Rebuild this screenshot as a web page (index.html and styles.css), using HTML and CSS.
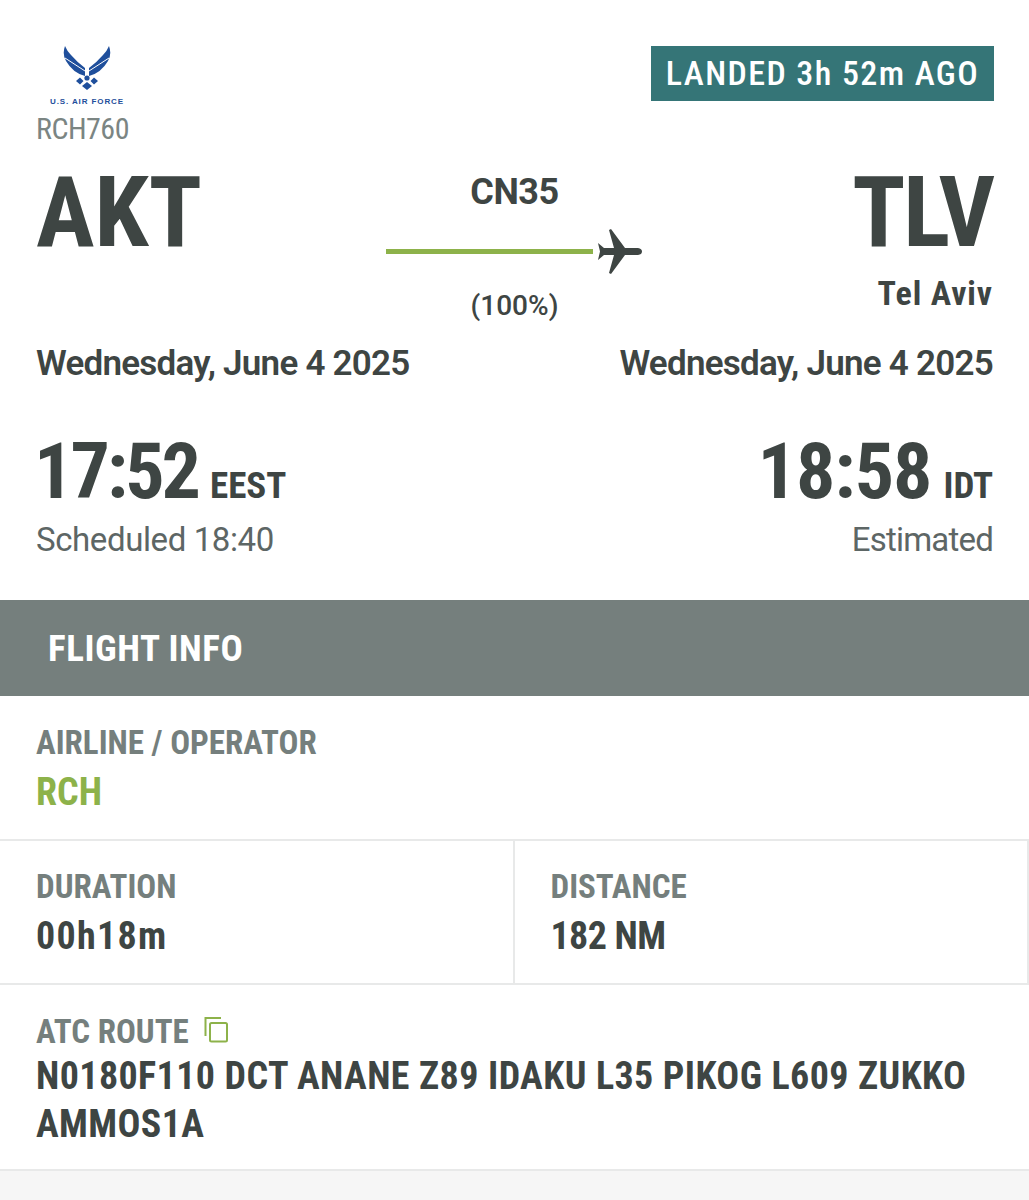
FILE: index.html
```html
<!DOCTYPE html>
<html lang="en">
<head>
    <meta charset="UTF-8">
    <meta name="viewport" content="width=device-width, initial-scale=1.0">
    <title>RCH760</title>
    <link rel="stylesheet" href="styles.css">
</head>
<body>
    <div class="summary">
        <div class="top-row">
            <div class="brand">
                <div class="logo">
                    <svg width="48" height="44" viewBox="0 0 48 44">
                        <path fill="#1f4f9c" d="M2 0 Q4 5 8 9 Q14 16 22 22 L22 30 Q10 27 3 15 Q-1 8 2 0 Z"/>
                        <path fill="#1f4f9c" d="M46 0 Q44 5 40 9 Q34 16 26 22 L26 30 Q38 27 45 15 Q49 8 46 0 Z"/>
                        <path fill="none" stroke="#fff" stroke-width="1" d="M2 12 L22 25 M46 12 L26 25"/>
                        <path fill="#1f4f9c" d="M13 35 L17 31.5 L20.5 35 L17 38.5 Z M35 35 L31 31.5 L27.5 35 L31 38.5 Z M24 36 L29 40 L24 44 L19 40 Z"/>
                        <circle cx="24" cy="32" r="2.6" fill="#1f4f9c"/>
                    </svg>
                    <span class="logo-text">U.S. AIR FORCE</span>
                </div>
                <div class="callsign">RCH760</div>
            </div>
            <div class="status">LANDED 3h 52m AGO</div>
        </div>

        <div class="route">
            <div class="airport">AKT</div>
            <div class="progress">
                <div class="aircraft">CN35</div>
                <div class="track">
                    <div class="track-line"></div>
                    <svg class="plane" width="45" height="45" viewBox="0 0 45 45">
                        <path fill="#3e4543" d="M14 0 L12 1 L17 19 L7 19 L1 14 L3 22.500 L1 31 L7 26 L17 26 L12 44 L14 45 L28 26 L41 26 Q45 25.500 45 22.500 Q45 19.500 41 19 L28 19 Z"/>
                    </svg>
                </div>
                <div class="percent">(100%)</div>
            </div>
            <div class="dest">
                <div class="airport">TLV</div>
                <div class="city">Tel Aviv</div>
            </div>
        </div>

        <div class="dates">
            <div>Wednesday, June 4 2025</div>
            <div>Wednesday, June 4 2025</div>
        </div>

        <div class="times">
            <div>
                <div class="time tight">17:52<span class="zone">EEST</span></div>
                <div class="time-note">Scheduled 18:40</div>
            </div>
            <div class="right">
                <div class="time">18:58<span class="zone">IDT</span></div>
                <div class="time-note">Estimated</div>
            </div>
        </div>
    </div>

    <div class="section-bar">FLIGHT INFO</div>

    <div class="info-row operator">
        <div class="label">AIRLINE / OPERATOR</div>
        <div class="value green">RCH</div>
    </div>

    <div class="info-split">
        <div class="info-cell">
            <div class="label">DURATION</div>
            <div class="value wide">00h18m</div>
        </div>
        <div class="info-cell">
            <div class="label">DISTANCE</div>
            <div class="value narrow">182 NM</div>
        </div>
    </div>

    <div class="info-row atc">
        <div class="label">ATC ROUTE
            <svg class="copy" width="24" height="27" viewBox="0 0 24 27">
                <path fill="none" stroke="#8db24a" stroke-width="2" d="M1.500 20 V2 H17"/>
                <rect x="6" y="7" width="17" height="18.500" rx="1.500" fill="none" stroke="#8db24a" stroke-width="2"/>
            </svg>
        </div>
        <div class="value">N0180F110 DCT ANANE Z89 IDAKU L35 PIKOG L609 ZUKKO AMMOS1A</div>
    </div>
</body>
</html>
```

FILE: styles.css
```css
body {
    margin: 0;
    background-color: #f6f6f6;
    color: #3e4543;
    font-family: Roboto, 'Liberation Sans', sans-serif;
    font-stretch: 75%;
}

.summary {
    background-color: #fff;
    height: 600px;
    box-sizing: border-box;
    padding: 46px 36px 0;
}

.top-row {
    display: flex;
    justify-content: space-between;
    align-items: flex-start;
    height: 104px;
}

.logo {
    display: flex;
    flex-direction: column;
    align-items: center;
    width: 102px;
}

.logo-text {
    font-family: 'Liberation Sans', sans-serif;
    font-stretch: normal;
    font-size: 8px;
    font-weight: bold;
    line-height: 9px;
    color: #1f4f9c;
    margin-top: 7px;
    letter-spacing: 0.9px;
    white-space: nowrap;
}

.callsign {
    font-size: 30px;
    color: #7b8583;
    line-height: 34px;
    letter-spacing: -0.5px;
    margin-top: 6px;
}

.status {
    background-color: #357577;
    color: #fff;
    font-size: 34px;
    font-weight: 500;
    letter-spacing: 1.400px;
    line-height: 55px;
    width: 343px;
    margin-right: -1px;
    text-align: center;
    white-space: nowrap;
}

.route {
    display: grid;
    grid-template-columns: 1fr 257px 1fr;
    height: 194px;
}

.airport {
    font-size: 98px;
    font-weight: 700;
    line-height: 92px;
    margin-top: 17px;
}

.progress {
    text-align: center;
    font-size: 36px;
    font-stretch: 100%;
    font-weight: 700;
}

.aircraft {
    line-height: 40px;
    margin-top: 22px;
    letter-spacing: -0.5px;
}

.track {
    display: flex;
    align-items: center;
    height: 45px;
    margin-top: 17px;
}

.track-line {
    flex: 1;
    height: 5px;
    background-color: #8db24a;
}

.plane {
    margin-left: 4px;
    margin-right: 1px;
}

.percent {
    font-size: 28px;
    font-weight: 500;
    line-height: 34px;
    margin-top: 15px;
}

.dest {
    text-align: right;
}

.dest .airport {
    letter-spacing: -2px;
}

.city {
    font-size: 34px;
    font-weight: 700;
    letter-spacing: 0.900px;
    line-height: 40px;
    margin-top: 14px;
}

.dates {
    display: flex;
    justify-content: space-between;
    font-size: 35px;
    font-stretch: 100%;
    font-weight: 600;
    letter-spacing: -0.750px;
    line-height: 40px;
    height: 70px;
}

.times {
    display: flex;
    justify-content: space-between;
    margin-top: 18px;
}

.right {
    text-align: right;
}

.time {
    font-size: 78px;
    font-weight: 700;
    line-height: 80px;
    letter-spacing: -1px;
}

.tight {
    letter-spacing: -3px;
    margin-left: -2px;
}

.zone {
    font-size: 37px;
    letter-spacing: 0;
    margin-left: 12px;
}

.time-note {
    font-size: 33px;
    font-stretch: 100%;
    letter-spacing: -0.400px;
    color: #5d6665;
    line-height: 38px;
    margin-top: -5px;
}

.right .time-note {
    letter-spacing: -0.800px;
}

.section-bar {
    background-color: #757f7d;
    color: #fff;
    height: 96px;
    line-height: 98px;
    padding-left: 48px;
    font-size: 37px;
    font-weight: 700;
    letter-spacing: 0.550px;
}

.info-row, .info-split {
    background-color: #fff;
    border-bottom: 2px solid #e8e9e9;
}

.info-row {
    padding: 0 36px;
}

.operator {
    height: 145px;
    box-sizing: border-box;
}

.info-split {
    display: flex;
    height: 142px;
}

.info-cell {
    flex: 1;
    padding: 26px 36px 0;
}

.info-cell + .info-cell {
    border-left: 2px solid #e8e9e9;
    border-right: 2px solid #e8e9e9;
}

.label {
    font-size: 33px;
    font-weight: 700;
    color: #757f7d;
    line-height: 40px;
}

.operator .label {
    padding-top: 27px;
}

.value {
    font-size: 38px;
    font-weight: 700;
    letter-spacing: 0.400px;
    line-height: 48px;
    margin-top: 5px;
}

.wide {
    letter-spacing: 1.300px;
}

.narrow {
    letter-spacing: -0.600px;
}

.green {
    color: #8db24a;
    margin-top: 5px;
    letter-spacing: 0;
}

.atc {
    height: 186px;
    box-sizing: border-box;
    padding-top: 27px;
}

.atc .value {
    margin-top: 0;
}

.copy {
    vertical-align: 0;
    margin-left: 8px;
}
```
